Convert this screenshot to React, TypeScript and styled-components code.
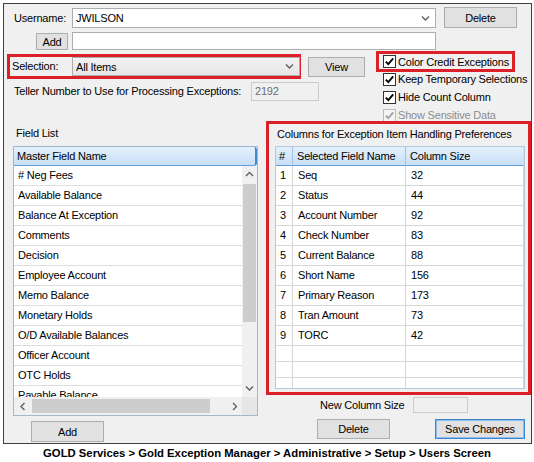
import React from "react";
import styled, { createGlobalStyle } from "styled-components";

const GlobalStyle = createGlobalStyle`
  html, body {
    margin: 0;
    padding: 0;
    background: #ffffff;
  }
  body {
    font-family: "Liberation Sans", Arial, sans-serif;
    font-size: 11px;
    letter-spacing: -0.2px;
    color: #000000;
  }
  * {
    box-sizing: border-box;
  }
`;

const RED = "#dd1f2a";

const Page = styled.div`
  width: 534px;
  height: 462px;
  overflow: hidden;
`;

const Frame = styled.div`
  margin: 3px 0 0 3px;
  width: 529px;
  height: 441px;
  border: 1px solid #3f3f3f;
  background: #f0f0f0;
  display: flex;
  flex-direction: column;
`;

const Row = styled.div<{ $top: number; $left?: number; $h: number }>`
  display: flex;
  align-items: flex-start;
  flex-shrink: 0;
  margin-top: ${(p) => p.$top}px;
  padding-left: ${(p) => p.$left ?? 0}px;
  height: ${(p) => p.$h}px;
`;

const Label = styled.span<{ $w?: number; $h?: number; $dim?: boolean }>`
  flex-shrink: 0;
  width: ${(p) => (p.$w ? `${p.$w}px` : "auto")};
  line-height: ${(p) => p.$h ?? 20}px;
  white-space: nowrap;
  color: ${(p) => (p.$dim ? "#8d8d8d" : "#000000")};
`;

const Combo = styled.div<{ $w: number; $h: number; $list?: boolean }>`
  display: flex;
  align-items: center;
  justify-content: space-between;
  flex-shrink: 0;
  width: ${(p) => p.$w}px;
  height: ${(p) => p.$h}px;
  padding: 0 5px 0 3px;
  border: 1px solid ${(p) => (p.$list ? "#acacac" : "#abadb3")};
  background: ${(p) => (p.$list ? "linear-gradient(#f2f2f2, #e6e6e6)" : "#ffffff")};
`;

const TextBox = styled.div<{ $w: number; $h: number; $disabled?: boolean }>`
  flex-shrink: 0;
  width: ${(p) => p.$w}px;
  height: ${(p) => p.$h}px;
  padding-left: 3px;
  line-height: ${(p) => p.$h - 2}px;
  border: 1px solid ${(p) => (p.$disabled ? "#cccccc" : "#abadb3")};
  background: ${(p) => (p.$disabled ? "#f0f0f0" : "#ffffff")};
  color: ${(p) => (p.$disabled ? "#6d6d6d" : "#000000")};
`;

const Button = styled.button<{ $w: number; $h?: number; $left?: number; $top?: number; $focus?: boolean }>`
  flex-shrink: 0;
  width: ${(p) => p.$w}px;
  height: ${(p) => p.$h ?? 20}px;
  margin-left: ${(p) => p.$left ?? 0}px;
  margin-top: ${(p) => p.$top ?? 0}px;
  padding: 0;
  font: inherit;
  letter-spacing: inherit;
  color: #000000;
  background: #e1e1e1;
  border: 1px solid ${(p) => (p.$focus ? "#3a86d6" : "#adadad")};
  box-shadow: ${(p) => (p.$focus ? "inset 0 0 0 1px #8fbdeb" : "none")};
`;

const RedBox = styled.div<{ $w: number; $h: number }>`
  flex-shrink: 0;
  width: ${(p) => p.$w}px;
  height: ${(p) => p.$h}px;
  border: 3px solid ${RED};
`;

const SelectionBox = styled(RedBox)`
  display: flex;
  padding-left: 2px;
`;

const MidSection = styled.div`
  display: flex;
  flex-shrink: 0;
  height: 70px;
  margin-top: 1px;
  padding-left: 3px;
`;

const MidLeft = styled.div`
  display: flex;
  flex-direction: column;
  width: 358px;
`;

const CheckList = styled.div`
  display: flex;
  flex-direction: column;
  margin-left: 11px;
`;

const CheckBoxFrame = styled(RedBox)`
  display: flex;
  align-items: center;
  padding-left: 4px;
`;

const CheckItem = styled.div<{ $first?: boolean }>`
  display: flex;
  align-items: center;
  height: 18px;
  margin-left: ${(p) => (p.$first ? 0 : 7)}px;
  margin-top: ${(p) => (p.$first ? -2 : 0)}px;
`;

const Box = styled.span<{ $disabled?: boolean }>`
  display: flex;
  align-items: center;
  justify-content: center;
  width: 13px;
  height: 13px;
  margin-right: 2px;
  border: 1px solid ${(p) => (p.$disabled ? "#bcbcbc" : "#333333")};
  background: ${(p) => (p.$disabled ? "#f4f4f4" : "#ffffff")};
`;

const LowerSection = styled.div`
  display: flex;
  flex: 1;
  padding-left: 9px;
`;

const LeftPane = styled.div`
  display: flex;
  flex-direction: column;
  width: 245px;
`;

const PaneTitle = styled.div<{ $top: number; $left: number }>`
  height: 14px;
  line-height: 14px;
  margin-top: ${(p) => p.$top}px;
  padding-left: ${(p) => p.$left}px;
  white-space: nowrap;
`;

const ListBox = styled.div`
  display: flex;
  flex-direction: column;
  height: 270px;
  margin-top: 6px;
  border: 1px solid #a3b8cf;
  background: #ffffff;
`;

const HeaderCell = styled.div<{ $pad?: number; $last?: boolean }>`
  height: 19px;
  line-height: 18px;
  padding-left: ${(p) => p.$pad ?? 4}px;
  white-space: nowrap;
  overflow: hidden;
  background: linear-gradient(#e4f0fc, #c8dff7);
  border-bottom: 1px solid #5c9ddd;
  border-right: 1px solid ${(p) => (p.$last ? "#c8dff7" : "#9fc3e8")};
`;

const ListHeader = styled(HeaderCell)`
  border-right: 2px solid #3f86d3;
  border-radius: 0 3px 3px 0;
`;

const ListBody = styled.div`
  display: flex;
  height: 231px;
`;

const ListRows = styled.div`
  flex: 1;
  overflow: hidden;
`;

const ListRow = styled.div`
  height: 20px;
  line-height: 19px;
  padding-left: 4px;
  border-bottom: 1px solid #dedede;
  white-space: nowrap;
`;

const VScroll = styled.div`
  display: flex;
  flex-direction: column;
  width: 15px;
  background: #f0f0f0;
`;

const ArrowBox = styled.div<{ $w?: number; $h?: number }>`
  display: flex;
  align-items: center;
  justify-content: center;
  flex-shrink: 0;
  width: ${(p) => (p.$w ? `${p.$w}px` : "auto")};
  height: ${(p) => (p.$h ? `${p.$h}px` : "auto")};
`;

const VThumb = styled.div`
  height: 138px;
  margin: 1px 1px 0 1px;
  background: #cdcdcd;
`;

const Spacer = styled.div`
  flex: 1;
`;

const HScroll = styled.div`
  display: flex;
  height: 18px;
`;

const HTrack = styled.div`
  display: flex;
  align-items: center;
  flex: 1;
  background: #f0f0f0;
`;

const HThumb = styled.div`
  width: 178px;
  height: 14px;
  margin-left: 1px;
  background: #cdcdcd;
`;

const Corner = styled.div`
  width: 15px;
  background: #e6e6e6;
`;

const RightPane = styled.div`
  display: flex;
  flex-direction: column;
  width: 265px;
  margin-left: 8px;
`;

const GridFrame = styled(RedBox)`
  display: flex;
  flex-direction: column;
`;

const Grid = styled.div`
  width: 250px;
  height: 243px;
  margin: 5px 0 0 6px;
  border: 1px solid #b3c9e0;
  background: #ffffff;
  overflow: hidden;
`;

const GridRow = styled.div<{ $h?: number }>`
  display: grid;
  grid-template-columns: 17px 113px 1fr;
  height: ${(p) => p.$h ?? 20}px;
`;

const Cell = styled.div<{ $pad?: number }>`
  padding-left: ${(p) => p.$pad ?? 5}px;
  line-height: 19px;
  white-space: nowrap;
  overflow: hidden;
  border-right: 1px solid #d7d7d7;
  border-bottom: 1px solid #d7d7d7;
`;

const Caption = styled.div`
  height: 18px;
  line-height: 18px;
  text-align: center;
  font-size: 11.3px;
  font-weight: bold;
  letter-spacing: 0;
`;

const Chevron = ({ dir }: { dir: "down" | "up" | "left" | "right" }) => {
  const pts = {
    down: "1,1.5 4.5,5 8,1.5",
    up: "1,5 4.5,1.5 8,5",
    left: "5.5,1 2,4.5 5.5,8",
    right: "3,1 6.5,4.5 3,8",
  }[dir];
  const vertical = dir === "down" || dir === "up";
  return (
    <svg width={vertical ? 9 : 8} height={vertical ? 7 : 9} viewBox={vertical ? "0 0 9 7" : "0 0 8 9"}>
      <polyline points={pts} fill="none" stroke="#606060" strokeWidth="1.4" />
    </svg>
  );
};

const Check = ({ label, disabled }: { label: string; disabled?: boolean }) => (
  <>
    <Box $disabled={disabled}>
      <svg width="11" height="11" viewBox="0 0 11 11">
        <polyline
          points="1.8,5.6 4.3,8.1 9.2,2.4"
          fill="none"
          stroke={disabled ? "#a2a2a2" : "#000000"}
          strokeWidth="1.9"
        />
      </svg>
    </Box>
    <Label $h={18} $dim={disabled}>
      {label}
    </Label>
  </>
);

const fields = [
  "# Neg Fees",
  "Available Balance",
  "Balance At Exception",
  "Comments",
  "Decision",
  "Employee Account",
  "Memo Balance",
  "Monetary Holds",
  "O/D Available Balances",
  "Officer Account",
  "OTC Holds",
  "Payable Balance",
];

const columns: [number, string, number][] = [
  [1, "Seq", 32],
  [2, "Status", 44],
  [3, "Account Number", 92],
  [4, "Check Number", 83],
  [5, "Current Balance", 88],
  [6, "Short Name", 156],
  [7, "Primary Reason", 173],
  [8, "Tran Amount", 73],
  [9, "TORC", 42],
];

export default function App() {
  return (
    <Page>
      <GlobalStyle />
      <Frame>
        <Row $top={4} $left={10} $h={20}>
          <Label $w={58}>Username:</Label>
          <Combo $w={364} $h={20}>
            <span>JWILSON</span>
            <Chevron dir="down" />
          </Combo>
          <Button $w={73} $h={21} $left={8} $top={-1}>
            Delete
          </Button>
        </Row>

        <Row $top={4} $left={32} $h={18}>
          <Button $w={32} $h={17} $top={1}>
            Add
          </Button>
          <TextBox $w={364} $h={18} style={{ marginLeft: 4 }} />
        </Row>

        <MidSection>
          <MidLeft>
            <Row $top={3} $h={25}>
              <SelectionBox $w={294} $h={25}>
                <Label $w={60} $h={19}>
                  Selection:
                </Label>
                <Combo $w={228} $h={19} $list>
                  <span>All Items</span>
                  <Chevron dir="down" />
                </Combo>
              </SelectionBox>
              <Button $w={57} $left={7} $top={3}>
                View
              </Button>
            </Row>
            <Row $top={3} $left={7} $h={19}>
              <Label $w={237} $h={19}>
                Teller Number to Use for Processing Exceptions:
              </Label>
              <TextBox $w={68} $h={19} $disabled>
                2192
              </TextBox>
            </Row>
          </MidLeft>

          <CheckList>
            <CheckBoxFrame $w={139} $h={21}>
              <Check label="Color Credit Exceptions" />
            </CheckBoxFrame>
            <CheckItem $first={false} style={{ marginTop: -2 }}>
              <Check label="Keep Temporary Selections" />
            </CheckItem>
            <CheckItem>
              <Check label="Hide Count Column" />
            </CheckItem>
            <CheckItem>
              <Check label="Show Sensitive Data" disabled />
            </CheckItem>
          </CheckList>
        </MidSection>

        <LowerSection>
          <LeftPane>
            <PaneTitle $top={5} $left={3}>
              Field List
            </PaneTitle>
            <ListBox>
              <ListHeader $pad={3}>Master Field Name</ListHeader>
              <ListBody>
                <ListRows>
                  {fields.map((f) => (
                    <ListRow key={f}>{f}</ListRow>
                  ))}
                </ListRows>
                <VScroll>
                  <ArrowBox $h={17}>
                    <Chevron dir="up" />
                  </ArrowBox>
                  <VThumb />
                  <Spacer />
                  <ArrowBox $h={17}>
                    <Chevron dir="down" />
                  </ArrowBox>
                </VScroll>
              </ListBody>
              <HScroll>
                <HTrack>
                  <ArrowBox $w={17} $h={18}>
                    <Chevron dir="left" />
                  </ArrowBox>
                  <HThumb />
                  <Spacer />
                  <ArrowBox $w={17} $h={18}>
                    <Chevron dir="right" />
                  </ArrowBox>
                </HTrack>
                <Corner />
              </HScroll>
            </ListBox>
            <Button $w={73} $h={21} $left={18} $top={5}>
              Add
            </Button>
          </LeftPane>

          <RightPane>
            <GridFrame $w={265} $h={274}>
              <PaneTitle $top={3} $left={8}>
                Columns for Exception Item Handling Preferences
              </PaneTitle>
              <Grid>
                <GridRow $h={19}>
                  <HeaderCell $pad={3}>#</HeaderCell>
                  <HeaderCell>Selected Field Name</HeaderCell>
                  <HeaderCell $last>Column Size</HeaderCell>
                </GridRow>
                {columns.map(([n, name, size]) => (
                  <GridRow key={n}>
                    <Cell $pad={4}>{n}</Cell>
                    <Cell>{name}</Cell>
                    <Cell>{size}</Cell>
                  </GridRow>
                ))}
                {[16, 16, 16].map((h, i) => (
                  <GridRow key={`e${i}`} $h={h}>
                    <Cell />
                    <Cell />
                    <Cell />
                  </GridRow>
                ))}
              </Grid>
            </GridFrame>
            <Row $top={2} $left={54} $h={16}>
              <Label $w={93} $h={16}>
                New Column Size
              </Label>
              <TextBox $w={55} $h={16} $disabled />
            </Row>
            <Row $top={6} $left={51} $h={21}>
              <Button $w={73}>Delete</Button>
              <Button $w={90} $left={45} $focus>
                Save Changes
              </Button>
            </Row>
          </RightPane>
        </LowerSection>
      </Frame>
      <Caption>GOLD Services &gt; Gold Exception Manager &gt; Administrative &gt; Setup &gt; Users Screen</Caption>
    </Page>
  );
}
